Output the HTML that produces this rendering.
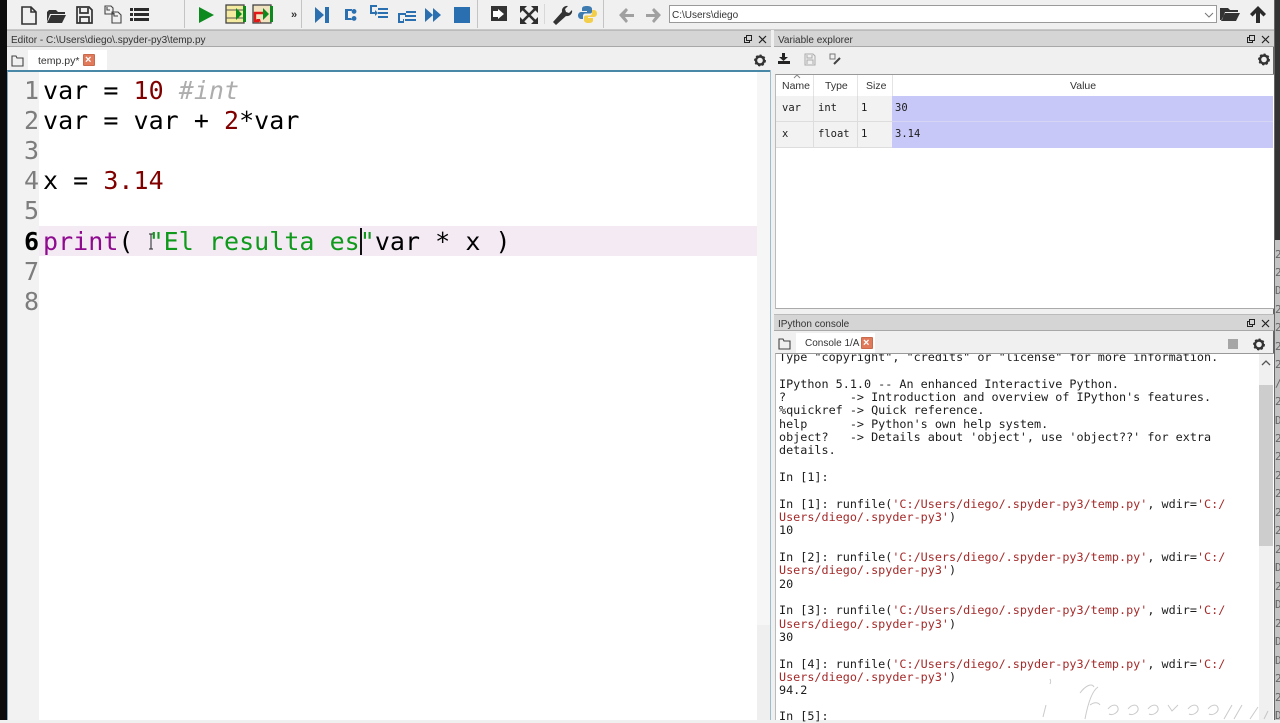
<!DOCTYPE html>
<html><head><meta charset="utf-8"><style>
*{box-sizing:border-box}
html,body{margin:0;padding:0}
body{width:1280px;height:720px;overflow:hidden;position:relative;background:#f0f0f0;font-family:"Liberation Sans",sans-serif;color:#222}
.a{position:absolute}
.t{position:absolute;white-space:pre;line-height:1}
.m{font-family:"DejaVu Sans Mono","Liberation Mono",monospace}
.ed{font-size:25px;letter-spacing:.03px;color:#000}
.ln{font-size:25px;color:#7d7d7d;font-family:"DejaVu Sans Mono",monospace}
.c{font-size:11.77px;color:#1c1c1c;font-family:"DejaVu Sans Mono",monospace}
.r{color:#a52a2a}
.hdr{background:#d5d5d5;border-top:1px solid #bbb;border-bottom:1px solid #a8a8a8}
.cell{position:absolute;border-right:1px solid #ddd;border-bottom:1px solid #ddd;background:#f2f2f2}
.e{position:absolute;left:1275px;font:11px "DejaVu Sans Mono",monospace;color:#666;line-height:1;white-space:pre}
svg{position:absolute;overflow:visible}
</style></head><body>
<div class="a" style="left:0;top:0;width:7px;height:720px;background:#0c0c0c"></div>
<div class="a" style="left:1274px;top:0;width:6px;height:720px;background:#333"></div>
<div class="a" style="left:1273px;top:240px;width:7px;height:480px;background:#c4c4c4"></div>
<div class="a" style="left:1273px;top:0;width:2px;height:720px;background:#666"></div>
<div class="e" style="top:249px">20</div><div class="e" style="top:267px">20</div><div class="e" style="top:285px">D1</div><div class="e" style="top:304px">20</div><div class="e" style="top:322px">20</div><div class="e" style="top:341px">20</div><div class="e" style="top:359px">20</div><div class="e" style="top:378px">/2</div><div class="e" style="top:396px">20</div><div class="e" style="top:415px">D1</div><div class="e" style="top:433px">20</div><div class="e" style="top:451px">20</div><div class="e" style="top:470px">20</div><div class="e" style="top:488px">20</div><div class="e" style="top:507px">20</div><div class="e" style="top:525px">20</div><div class="e" style="top:544px">20</div><div class="e" style="top:562px">D1</div><div class="e" style="top:581px">20</div><div class="e" style="top:599px">D1</div><div class="e" style="top:618px">20</div><div class="e" style="top:636px">D1</div><div class="e" style="top:655px">D1</div><div class="e" style="top:673px">20</div><div class="e" style="top:692px">20</div><div class="e" style="top:710px">D1</div>
<!-- toolbar -->
<div class="a" style="left:7px;top:0;width:1267px;height:30px;background:#f0f0f0;border-bottom:1px solid #c8c8c8"></div>
<div class="a" style="left:184px;top:0;width:1px;height:28px;background:#c4c4c4"></div>
<div class="a" style="left:301px;top:0;width:1px;height:28px;background:#c4c4c4"></div>
<div class="a" style="left:477px;top:0;width:1px;height:28px;background:#c4c4c4"></div>
<div class="a" style="left:603px;top:0;width:1px;height:28px;background:#c4c4c4"></div>
<div class="a" style="left:544px;top:4px;width:1px;height:20px;background:#d8d8d8"></div>
<svg style="left:0;top:0" width="1280" height="30">
<g fill="none" stroke="#333" stroke-width="1.6">
<path d="M22 7h9l5 5v12H22zM31 7v5h5"/>
</g>
<path fill="#333" d="M47 12v10l3-8h15v-2h-7l-2-2h-7zM51 15h15l-4 8H47z"/>
<g fill="none" stroke="#333" stroke-width="1.7"><path d="M77 7h12l3 3v13H77zM80 8v5h8V8M80 23v-6h9v6"/></g>
<g fill="none" stroke="#444" stroke-width="1.1"><path d="M105 6h6l2 2v6h-8zM112 12h6l3 3v8h-9z"/><path d="M107 7v3h3M114 13v3h4"/></g>
<path fill="#2b2b2b" d="M130 8h3v3h-3zM134 8h15v3h-15zM130 13h3v3h-3zM134 13h15v3h-15zM130 18h3v3h-3zM134 18h15v3h-15z"/>
<path fill="#0d8a1e" d="M199 7l15 8-15 8z"/>
<rect x="226" y="5" width="18" height="18" fill="#f5eba0" stroke="#444" stroke-width="1.3"/><path d="M226 10h18M226 18h18" stroke="#555" fill="none"/>
<path fill="#0d8a1e" d="M236 8l6 6-6 6zM243 6h3v16h-3z"/>
<rect x="253" y="5" width="18" height="18" fill="#f2e3c0" stroke="#444" stroke-width="1.3"/>
<path fill="#0d8a1e" d="M263 8l6 6-6 6zM270 6h3v16h-3z"/>
<path fill="none" stroke="#e01818" stroke-width="2.4" d="M263 13h-8v8h4"/><path fill="#e01818" d="M256 19l5 4-1-4z"/>
<text x="291" y="18" font-size="11" font-family="Liberation Sans" font-weight="bold" fill="#333">»</text>
<path fill="#2a6fb0" d="M315 7l9 8-9 8zM325 7h4v16h-4z"/>
<path fill="#2a6fb0" d="M345 9h7v2h-4v7h4v2h-7zM354 9a2.400 2.400 0 1 0 .1 0M354 16a2.400 2.400 0 1 0 .1 0"/>
<path fill="#2a6fb0" d="M370 5h7v2h-5v5h3v-2l3 3-3 3v-2h-5zM378 8h10v2h-10zM378 12h10v2h-10zM378 16h10v2h-10z"/>
<path fill="#2a6fb0" d="M398 13h8v2h-6v6h3v-2h1v4h-6zM406 11h10v2h-10zM405 15h11v2h-11zM405 19h11v2h-11z"/>
<path fill="#2a6fb0" d="M425 8l8 7-8 7zM433 8l8 7-8 7z"/>
<rect x="454" y="7" width="16" height="16" fill="#2a6fb0"/>
<rect x="491" y="6" width="16" height="15" fill="#333"/><path fill="#fff" d="M493 11h5v-2l6 5-6 5v-2h-5z"/>
<path fill="none" stroke="#2f2f2f" stroke-width="2.600" d="M523 9l12 12M535 9l-12 12"/>
<path fill="#2f2f2f" d="M520 6h7l-7 7zM538 6h-7l7 7zM520 24h7l-7-7zM538 24h-7l7-7z"/>
<path fill="#333" d="M553 22l9-10a5 5 0 0 1 6-6l-3 3 1 3 3 1 3-3a5 5 0 0 1-6 6l-10 9z"/>
<path fill="#3d7bb0" d="M587 6c-4 0-5 1-5 3v2h5v1h-6c-2 0-3 2-3 3.500s1 3.500 3 3.500h2v-3c0-1.500 1-2.500 2.500-2.500H590c1.500 0 2-1 2-2V9c0-2-2-3-5-3z"/>
<path fill="#f3ce4a" d="M588 23c4 0 5-1 5-3v-2h-5v-1h6c2 0 3-2 3-3.500S596 10 594 10h-2v3c0 1.500-1 2.500-2.500 2.500H586c-1.500 0-2 1-2 2V20c0 2 2 3 4 3z"/>
<path fill="#a0a0a0" d="M619 15l7-7 2 2-3 4h9v3h-9l3 4-2 2z"/>
<path fill="#a0a0a0" d="M661 15l-7-7-2 2 3 4h-9v3h9l-3 4 2 2z"/>
<path fill="#333" d="M1220 8v12l2 0 3-8h13V10h-8l-2-2zM1225 13h15l-4 8h-15z"/>
<path fill="#2b2b2b" d="M1258 6l8 8-2.500 2.500-3.500-3.500V23h-4V13l-3.500 3.500L1250 14z"/>
</svg>
<div class="a" style="left:669px;top:5px;width:548px;height:18px;background:#fff;border:1px solid #9a9a9a"></div>
<div class="t" style="left:672px;top:10.500px;font-size:10px;color:#333">C:\Users\diego</div>
<svg style="left:1204px;top:12px" width="12" height="8"><path d="M1 1l4 4 4-4" fill="none" stroke="#777"/></svg>
<!-- editor -->
<div class="a hdr" style="left:7px;top:30px;width:764px;height:17px"></div>
<div class="t" style="left:11px;top:36px;font-size:10px;color:#333">Editor - C:\Users\diego\.spyder-py3\temp.py</div>
<div class="a" style="left:7px;top:47px;width:764px;height:23px;background:#f0f0f0"></div>
<div class="a" style="left:28px;top:50px;width:79px;height:20px;background:#fff"></div>
<div class="t" style="left:38px;top:55.500px;font-size:10.500px;color:#333">temp.py*</div>
<div class="a" style="left:83px;top:54px;width:12px;height:12px;background:#e07a5a;border:1px solid #c96a4c;border-radius:1px"></div>
<div class="t" style="left:85px;top:54.500px;font-size:11px;font-weight:bold;color:#fff">×</div>
<svg style="left:0;top:0" width="770" height="70">
<path d="M12 56h4l1 2h6v8H12z" fill="none" stroke="#444" stroke-width="1.1"/>
<rect x="744.500" y="37.500" width="5" height="5" fill="none" stroke="#222"/><rect x="746.500" y="35.500" width="5" height="5" fill="#d5d5d5" stroke="#222"/>
<path d="M759 36l7 7M766 36l-7 7" stroke="#222" stroke-width="1.2"/>
<circle cx="760" cy="60.500" r="4" fill="none" stroke="#333" stroke-width="2.400"/>
<circle cx="760" cy="60.500" r="5.200" fill="none" stroke="#333" stroke-width="1.500" stroke-dasharray="2 2"/>
</svg>
<div class="a" style="left:7px;top:70px;width:764px;height:650px;background:#fff;border-top:2px solid #4a88a8;border-left:1px solid #7fa8bd"></div>
<div class="a" style="left:8px;top:72px;width:31px;height:648px;background:#f2f2f2"></div>
<div class="a" style="left:757px;top:72px;width:14px;height:648px;background:#f6f6f6"></div>
<div class="a" style="left:757px;top:625px;width:14px;height:95px;background:#efefef"></div>
<div class="a" style="left:770px;top:70px;width:1px;height:650px;background:#9fbccb"></div>
<div class="a" style="left:39px;top:226px;width:718px;height:30px;background:#f4eaf4"></div>
<div class="t ln" style="left:24px;top:78px">1</div>
<div class="t ln" style="left:24px;top:108px">2</div>
<div class="t ln" style="left:24px;top:138px">3</div>
<div class="t ln" style="left:24px;top:168px">4</div>
<div class="t ln" style="left:24px;top:198px">5</div>
<div class="t ln" style="left:24px;top:229px;color:#000;font-weight:bold">6</div>
<div class="t ln" style="left:24px;top:259px">7</div>
<div class="t ln" style="left:24px;top:289px">8</div>
<div class="t m ed" style="left:43px;top:78px">var = <span style="color:#800000">10</span> <span style="color:#adadad;font-style:italic">#int</span></div>
<div class="t m ed" style="left:43px;top:108px">var = var + <span style="color:#800000">2</span>*var</div>
<div class="t m ed" style="left:43px;top:168px">x = <span style="color:#800000">3.14</span></div>
<div class="t m ed" style="left:43px;top:229px"><span style="color:#8f0a8f">print</span>( <span style="color:#0f9a1c">"El resulta es"</span>var * x )</div>
<div class="a" style="left:360px;top:228px;width:2px;height:27px;background:#111"></div>
<svg style="left:147px;top:233px" width="9" height="18"><path d="M2 1h4M2 16h4M4 1v15" stroke="#222" fill="none"/></svg>
<!-- variable explorer -->
<div class="a hdr" style="left:774px;top:30px;width:500px;height:17px"></div>
<div class="t" style="left:778px;top:36px;font-size:10px;color:#333">Variable explorer</div>
<svg style="left:0;top:0" width="1280" height="360">
<rect x="1247.500" y="37.500" width="5" height="5" fill="none" stroke="#222"/><rect x="1249.500" y="35.500" width="5" height="5" fill="#d5d5d5" stroke="#222"/>
<path d="M1262 36l7 7M1269 36l-7 7" stroke="#222" stroke-width="1.2"/>
<path d="M782 53h3v4h3l-4.500 4-4.500-4h3zM778 61h12v3h-12z" fill="#222"/>
<path d="M805 54h8l2 2v9h-10zM807 55v3h5v-3M807 64v-4h6v4" fill="none" stroke="#aaa"/>
<path d="M830 54h5v5h-5z" fill="none" stroke="#777"/><path d="M834 64l6-6" stroke="#444" stroke-width="2"/>
<circle cx="1264" cy="59.500" r="4" fill="none" stroke="#333" stroke-width="2.400"/>
<circle cx="1264" cy="59.500" r="5.200" fill="none" stroke="#333" stroke-width="1.500" stroke-dasharray="2 2"/>
</svg>
<div class="a" style="left:775px;top:74px;width:499px;height:235px;background:#fff;border-top:1px solid #999;border-bottom:1px solid #aaa;border-left:1px solid #bbb"></div>
<div class="a" style="left:813px;top:75px;width:1px;height:21px;background:#e4e4e4"></div>
<div class="a" style="left:857px;top:75px;width:1px;height:21px;background:#e4e4e4"></div>
<div class="a" style="left:892px;top:75px;width:1px;height:21px;background:#e4e4e4"></div>
<svg style="left:793px;top:74px" width="8" height="5"><path d="M1 4l3-3 3 3" stroke="#888" fill="none"/></svg>
<div class="t" style="left:782px;top:81px;font-size:10.500px;color:#333">Name</div>
<div class="t" style="left:825px;top:81px;font-size:10.500px;color:#333">Type</div>
<div class="t" style="left:866px;top:81px;font-size:10.500px;color:#333">Size</div>
<div class="t" style="left:1070px;top:81px;font-size:10.500px;color:#333">Value</div>
<div class="cell" style="left:776px;top:96px;width:38px;height:26px"></div>
<div class="cell" style="left:814px;top:96px;width:44px;height:26px"></div>
<div class="cell" style="left:858px;top:96px;width:35px;height:26px"></div>
<div class="cell" style="left:776px;top:122px;width:38px;height:26px"></div>
<div class="cell" style="left:814px;top:122px;width:44px;height:26px"></div>
<div class="cell" style="left:858px;top:122px;width:35px;height:26px"></div>
<div class="a" style="left:892px;top:96px;width:381px;height:52px;background:#c8c8f8"></div>
<div class="a" style="left:892px;top:121px;width:381px;height:1px;background:#d6d6f4"></div>
<div class="t c" style="left:782px;top:103px;font-size:10.500px">var</div>
<div class="t c" style="left:818px;top:103px;font-size:10.500px">int</div>
<div class="t c" style="left:861px;top:103px;font-size:10.500px">1</div>
<div class="t c" style="left:895px;top:103px;font-size:10.500px">30</div>
<div class="t c" style="left:782px;top:129px;font-size:10.500px">x</div>
<div class="t c" style="left:818px;top:129px;font-size:10.500px">float</div>
<div class="t c" style="left:861px;top:129px;font-size:10.500px">1</div>
<div class="t c" style="left:895px;top:129px;font-size:10.500px">3.14</div>
<!-- console -->
<div class="a hdr" style="left:774px;top:314px;width:500px;height:17px"></div>
<div class="t" style="left:778px;top:320px;font-size:10px;color:#333">IPython console</div>
<div class="a" style="left:796px;top:333px;width:79px;height:20px;background:#fff"></div>
<div class="t" style="left:805px;top:339px;font-size:10px;color:#333">Console 1/A</div>
<div class="a" style="left:861px;top:337px;width:12px;height:12px;background:#e07a5a;border:1px solid #c96a4c;border-radius:1px"></div>
<div class="t" style="left:863px;top:337.500px;font-size:11px;font-weight:bold;color:#fff">×</div>
<div class="a" style="left:1228px;top:339px;width:10px;height:10px;background:#a5a5a5"></div>
<svg style="left:0;top:0" width="1280" height="360">
<path d="M779 339h4l1 2h6v8h-11z" fill="none" stroke="#444" stroke-width="1.1"/>
<rect x="1247.500" y="321.500" width="5" height="5" fill="none" stroke="#222"/><rect x="1249.500" y="319.500" width="5" height="5" fill="#d5d5d5" stroke="#222"/>
<path d="M1262 320l7 7M1269 320l-7 7" stroke="#222" stroke-width="1.2"/>
<circle cx="1259" cy="344.500" r="4" fill="none" stroke="#333" stroke-width="2.400"/>
<circle cx="1259" cy="344.500" r="5.200" fill="none" stroke="#333" stroke-width="1.500" stroke-dasharray="2 2"/>
</svg>
<div class="a" style="left:775px;top:353px;width:499px;height:367px;background:#fff;border-top:1px solid #999;border-left:1px solid #bbb;overflow:hidden">
<div class="t c" style="left:3px;top:-2px">Type "copyright", "credits" or "license" for more information.</div>
</div>
<div class="a" style="left:1259px;top:354px;width:14px;height:366px;background:#f0f0f0"></div>
<div class="a" style="left:1259px;top:385px;width:14px;height:161px;background:#cdcdcd"></div>
<svg style="left:1261px;top:360px" width="10" height="7"><path d="M1 5l4-4 4 4" stroke="#555" stroke-width="1.3" fill="none"/></svg>
<div class="t c" style="left:779px;top:379px">IPython 5.1.0 -- An enhanced Interactive Python.</div>
<div class="t c" style="left:779px;top:392px">?         -&gt; Introduction and overview of IPython's features.</div>
<div class="t c" style="left:779px;top:405px">%quickref -&gt; Quick reference.</div>
<div class="t c" style="left:779px;top:419px">help      -&gt; Python's own help system.</div>
<div class="t c" style="left:779px;top:432px">object?   -&gt; Details about 'object', use 'object??' for extra</div>
<div class="t c" style="left:779px;top:445px">details.</div>
<div class="t c" style="left:779px;top:472px">In [1]:</div>
<div class="t c" style="left:779px;top:499px">In [1]: runfile(<span class="r">'C:/Users/diego/.spyder-py3/temp.py'</span>, wdir=<span class="r">'C:/</span></div>
<div class="t c" style="left:779px;top:512px"><span class="r">Users/diego/.spyder-py3'</span>)</div>
<div class="t c" style="left:779px;top:525px">10</div>
<div class="t c" style="left:779px;top:552px">In [2]: runfile(<span class="r">'C:/Users/diego/.spyder-py3/temp.py'</span>, wdir=<span class="r">'C:/</span></div>
<div class="t c" style="left:779px;top:565px"><span class="r">Users/diego/.spyder-py3'</span>)</div>
<div class="t c" style="left:779px;top:579px">20</div>
<div class="t c" style="left:779px;top:605px">In [3]: runfile(<span class="r">'C:/Users/diego/.spyder-py3/temp.py'</span>, wdir=<span class="r">'C:/</span></div>
<div class="t c" style="left:779px;top:619px"><span class="r">Users/diego/.spyder-py3'</span>)</div>
<div class="t c" style="left:779px;top:632px">30</div>
<div class="t c" style="left:779px;top:659px">In [4]: runfile(<span class="r">'C:/Users/diego/.spyder-py3/temp.py'</span>, wdir=<span class="r">'C:/</span></div>
<div class="t c" style="left:779px;top:672px"><span class="r">Users/diego/.spyder-py3'</span>)</div>
<div class="t c" style="left:779px;top:685px">94.2</div>
<div class="t c" style="left:779px;top:711px">In [5]:</div>
<!-- watermark -->
<svg style="left:1010px;top:675px" width="270" height="45">
<g fill="none" stroke="#b4b4b4" stroke-width="1" opacity=".7">
<path d="M40 4c1 2 1 3 0 5M36 30c-1 4-2 8-3 12"/>
<path d="M88 12c-6 4-10 16-13 32M80 30c4-3 8-3 10 0M70 18c6-8 12-10 14-6"/>
<path d="M98 34c4-5 9-5 10-1s-5 8-9 6M118 34c4-5 9-5 10-1s-5 8-9 6M138 34c4-5 9-5 10-1s-5 8-9 6M158 30l4 6 6-6M178 34c4-5 9-5 10-1s-5 8-9 6M198 34c4-5 9-5 10-1s-5 8-9 6"/>
<path d="M222 30l-8 14M232 30l-8 14M248 32l-8 12M258 36l-4 8"/>
</g></svg>
</body></html>
